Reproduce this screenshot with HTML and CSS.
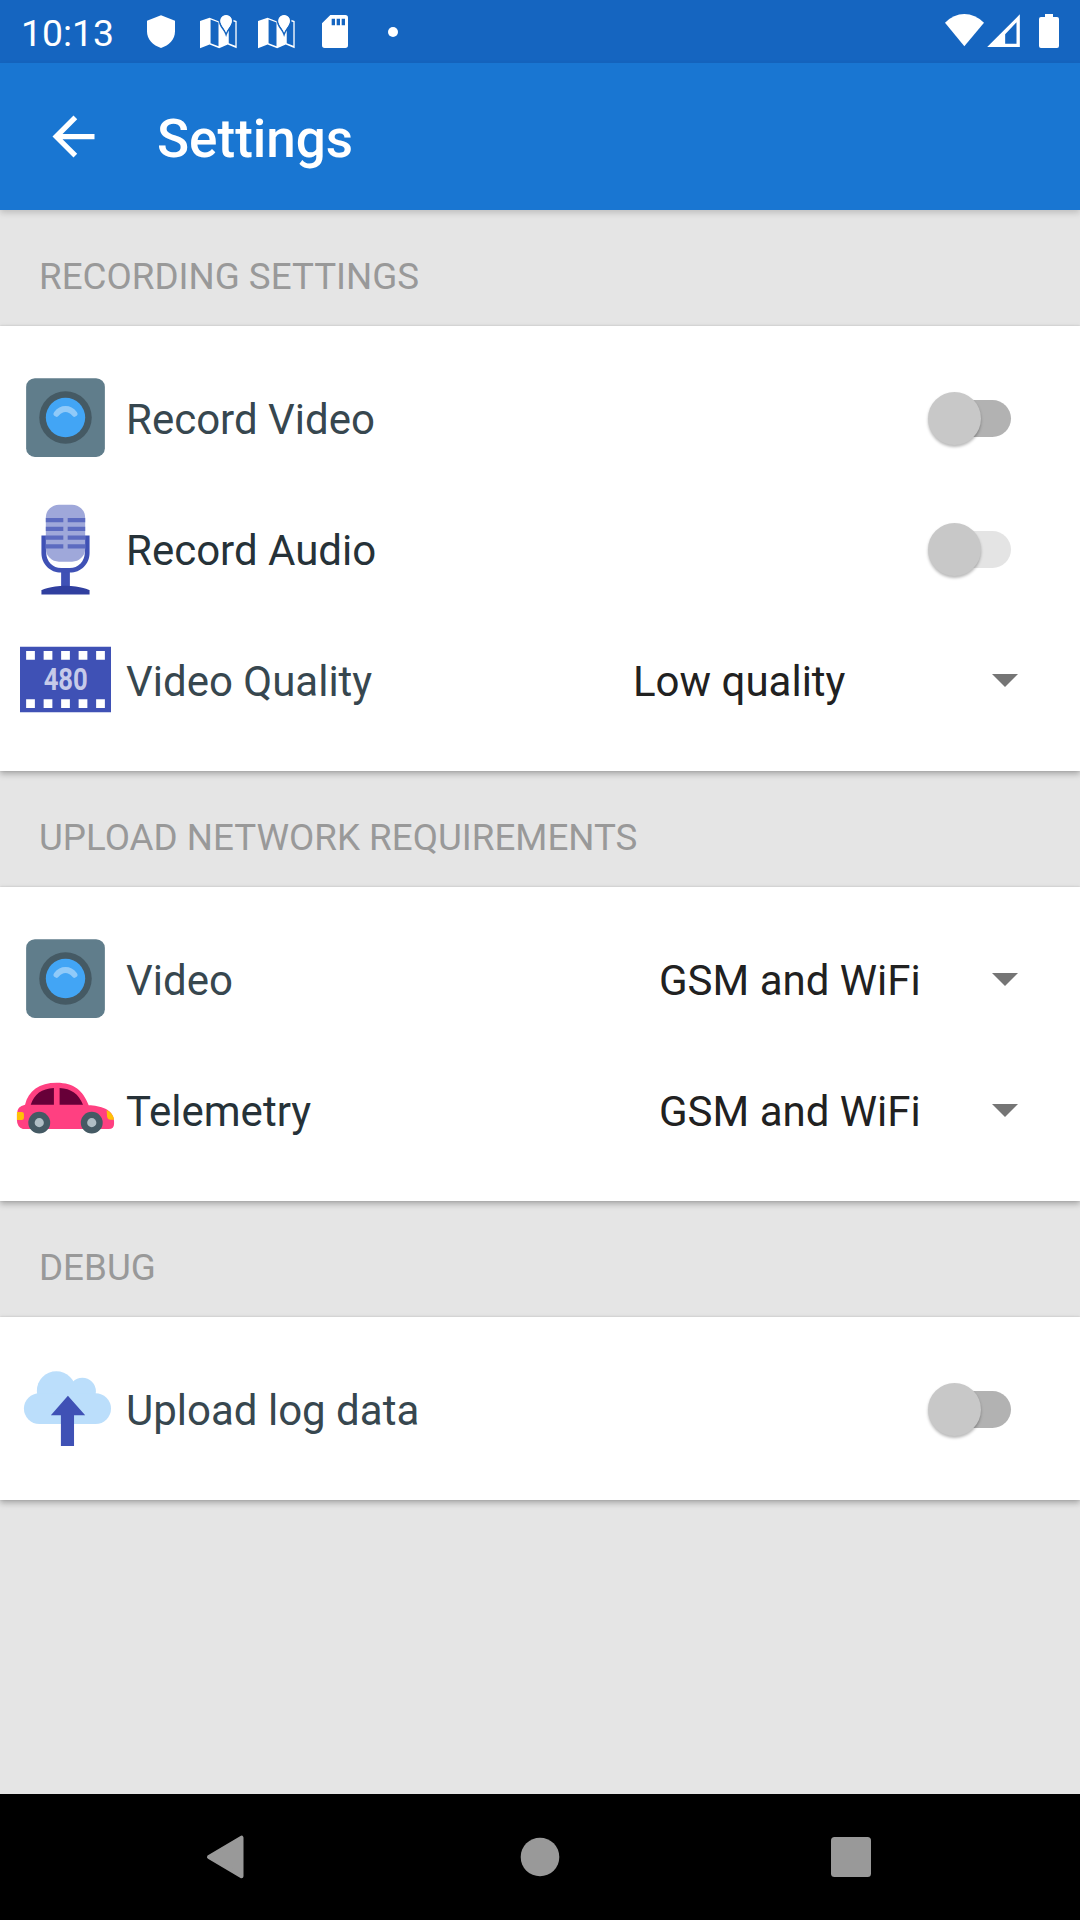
FILE: index.html
```html
<!DOCTYPE html>
<html lang="en">
<head>
<meta charset="utf-8">
<title>Settings</title>
<link rel="stylesheet" href="styles.css">
</head>
<body>
<svg class="defs" width="0" height="0">
  <symbol id="map" viewBox="600 0 112 189">
    <path fill="#fff" fill-rule="evenodd" d="M600 63l29-10 29 11 26-10 27 9v82l-27-11-26 11-29-11-29 11zM632 58v72l24 9V67zM687 84v46l20 8V66l-8-2z"/>
    <path fill="#fff" stroke="#1565c0" stroke-width="5" d="M679 103c-5-16-20-24-20-41a20 20 0 0 1 40 0c0 17-15 25-20 41z"/>
    <path fill="#fff" d="M679 98c-5-14-17-22-17-36a17 17 0 0 1 34 0c0 14-12 22-17 36z"/>
  </symbol>
  <symbol id="camera" viewBox="0 0 48 48">
    <rect x="6" y="6" width="36" height="36" rx="4" fill="#607d8b"/>
    <circle cx="24" cy="24" r="12" fill="#455a64"/>
    <circle cx="24" cy="24" r="9" fill="#42a5f5"/>
    <path d="M19.900 22.300c1.100-1.400 2.500-2.200 4.100-2.200s3 .8 4.100 2.200" fill="none" stroke="#90caf9" stroke-width="2.700" stroke-linecap="round"/>
  </symbol>
</svg>

<header class="status">
  <span class="clock">10:13</span>
  <svg class="shield" width="28" height="63" viewBox="441 0 84 189"><path fill="#fff" d="M483 46l42 16v32c0 24-18 43-42 50-24-7-42-26-42-50V62z"/></svg>
  <svg class="map" width="37" height="63"><use href="#map"/></svg>
  <svg class="map" width="37" height="63"><use href="#map"/></svg>
  <svg class="sd" width="26" height="63" viewBox="966 0 78 189"><path fill="#fff" fill-rule="evenodd" d="M991 45h45q8 0 8 8v83q0 8-8 8h-62q-8 0-8-8V70zM995 56v20h10V56zM1010 56v20h10V56zM1025 56v20h10V56z"/></svg>
  <i class="dot"></i>
  <svg class="wifi" width="39" height="63" viewBox="135 0 117 189"><path fill="#fff" d="M135 68q26-26 58-26t59 26l-59 71z"/></svg>
  <svg class="signal" width="33" height="63" viewBox="262 0 98 189"><path fill="#fff" fill-rule="evenodd" d="M360 43v98h-98zM350 67l-34 36v28h34z"/></svg>
  <svg class="battery" width="20" height="63" viewBox="417 0 60 189"><path fill="#fff" d="M435 42h24v9h12q6 0 6 6v81q0 6-6 6h-48q-6 0-6-6V57q0-6 6-6h12z"/></svg>
</header>

<div class="appbar">
  <svg width="63" height="63" viewBox="0 0 24 24"><path fill="#fff" d="M20 11H7.830l5.590-5.590L12 4l-8 8 8 8 1.410-1.410L7.830 13H20v-2z"/></svg>
  <h1>Settings</h1>
</div>

<main>
  <h2>RECORDING SETTINGS</h2>
  <section>
    <div class="row">
      <svg class="icon"><use href="#camera"/></svg>
      <span class="label soft">Record Video</span>
      <span class="switch"></span>
    </div>
    <div class="row">
      <svg class="icon" viewBox="0 0 48 48">
        <path fill="#3f51b5" d="M22 34h4v8h-4z"/>
        <path fill="#3f51b5" d="M13 18v8c0 5 4 9 9 9h4c5 0 9-4 9-9v-8h-2.200v8c0 3.800-3.100 6.900-6.800 6.900h-4c-3.700 0-6.800-3.100-6.800-6.900v-8z"/>
        <rect x="15" y="4" width="18" height="26" rx="6" fill="#9fa8da"/>
        <path fill="#5c6bc0" d="M15 10h8v2h-8zM25 10h8v2h-8zM15 14h8v2h-8zM25 14h8v2h-8zM15 18h8v2h-8zM25 18h8v2h-8zM15 22h8v2h-8zM25 22h8v2h-8z"/>
        <path fill="#303f9f" d="M13 45v-2s4-2 11-2 11 2 11 2v2z"/>
      </svg>
      <span class="label">Record Audio</span>
      <span class="switch disabled"></span>
    </div>
    <div class="row">
      <svg class="icon" viewBox="0 0 48 48">
        <path fill="#3f51b5" d="M3.200 9h41.600v30H3.200z"/>
        <path fill="#fff" d="M6 11h4v4H6zM14 11h4v4h-4zM22 11h4v4h-4zM30 11h4v4h-4zM38 11h4v4h-4zM6 33h4v4H6zM14 33h4v4h-4zM22 33h4v4h-4zM30 33h4v4h-4zM38 33h4v4h-4z"/>
        <text class="resolution" x="14" y="28.900" textLength="20.200" lengthAdjust="spacingAndGlyphs">480</text>
      </svg>
      <span class="label soft">Video Quality</span>
      <span class="value quality">Low quality</span>
      <i class="caret"></i>
    </div>
  </section>

  <h2>UPLOAD NETWORK REQUIREMENTS</h2>
  <section>
    <div class="row">
      <svg class="icon"><use href="#camera"/></svg>
      <span class="label soft">Video</span>
      <span class="value">GSM and WiFi</span>
      <i class="caret"></i>
    </div>
    <div class="row">
      <svg class="icon" viewBox="0 0 48 48">
        <path fill="#ff4081" d="M1.800 26q0-3.500 3.700-4.200C7 15.500 12 11.800 20 11.800S32 15.500 34.600 22c5 .2 11.600 1.600 11.600 7.500v1q0 2.400-2.400 2.400H4.500q-2.700-1-2.700-4z"/>
        <path fill="#670038" d="M8.100 21.800C9.800 17 13 14.500 18.700 14.200v7.600zM21.300 14.200c5.200.2 8.800 2.800 10.700 7.600H21.300z"/>
        <path fill="#ffc107" d="M1.800 25.100H4q1 0 1 1v1.700q0 1-1 1H1.800zM42.800 24.200q3 1.400 3.400 4.500h-1.700q-1.200 0-1.500-1.500z"/>
        <circle cx="12" cy="30" r="5" fill="#455a64"/><circle cx="36" cy="30" r="5" fill="#455a64"/>
        <circle cx="12" cy="30" r="2.100" fill="#b0bec5"/><circle cx="36" cy="30" r="2.100" fill="#b0bec5"/>
      </svg>
      <span class="label">Telemetry</span>
      <span class="value">GSM and WiFi</span>
      <i class="caret"></i>
    </div>
  </section>

  <h2>DEBUG</h2>
  <section>
    <div class="row">
      <svg class="icon" viewBox="0 0 48 48">
        <g fill="#bbdefb"><circle cx="19.800" cy="15.900" r="8.900"/><circle cx="31.700" cy="16.100" r="6.200"/><rect x="5" y="17" width="39.800" height="14.100" rx="7.050"/></g>
        <path fill="#3f51b5" d="M25.100 18.200l7.900 8.900h-5.100v14h-6v-14h-4.600z"/>
      </svg>
      <span class="label soft">Upload log data</span>
      <span class="switch"></span>
    </div>
  </section>
</main>

<nav>
  <svg width="40" height="46" viewBox="205 1834 40 46"><path fill="#999" stroke="#999" stroke-width="4" stroke-linejoin="round" d="M209 1857l32.500-19.300v38.600z"/></svg>
  <svg width="40" height="40" viewBox="0 0 40 40"><circle cx="20" cy="20" r="19.300" fill="#999"/></svg>
  <svg width="40" height="40" viewBox="0 0 40 40"><rect width="40" height="40" rx="3.500" fill="#999"/></svg>
</nav>
</body>
</html>
```
FILE: styles.css
```css
* { box-sizing: border-box; }

body {
  margin: 0;
  width: 1080px;
  height: 1920px;
  display: flex;
  flex-direction: column;
  overflow: hidden;
  background: #e5e5e5;
  font-family: Roboto, sans-serif;
  color: #212121;
}

svg { display: block; flex: none; }
.defs { display: none; }

.status {
  height: 63px;
  flex: none;
  display: flex;
  align-items: center;
  padding: 0 21px 0 21px;
  background: #1565c0;
  color: #fff;
}
.clock {
  width: 126px;
  padding-top: 3px;
  font-size: 37.3px;
  white-space: nowrap;
}
.map { margin-left: 25px; }
.map + .map { margin-left: 21px; }
.sd { margin-left: 27px; }
.dot {
  width: 10px;
  height: 10px;
  margin-left: 40px;
  border-radius: 50%;
  background: #fff;
}
.wifi { margin-left: auto; }
.signal { margin-left: 3px; }
.battery { margin-left: 19px; }

.appbar {
  height: 147px;
  flex: none;
  display: flex;
  align-items: center;
  padding-left: 42px;
  background: #1976d2;
  color: #fff;
  position: relative;
  box-shadow: 0 3px 6px rgba(0, 0, 0, .16);
}
.appbar h1 {
  margin: 0 0 0 52px;
  padding-top: 5px;
  font-size: 53px;
  font-weight: 500;
}

main { flex: 1; }

h2 {
  height: 116px;
  margin: 0;
  padding: 17px 0 0 39px;
  display: flex;
  align-items: center;
  font-size: 36.75px;
  font-weight: 400;
  color: #999;
}

section {
  padding: 26px 0;
  background: #fff;
  box-shadow: 0 3px 6px rgba(0, 0, 0, .27), 0 0 2px rgba(0, 0, 0, .12);
}

.row {
  height: 131px;
  display: flex;
  align-items: center;
  padding-left: 13px;
  font-size: 42px;
  white-space: nowrap;
}
.icon { width: 105px; height: 105px; }
.resolution {
  font-family: Roboto, sans-serif;
  font-size: 14px;
  font-weight: 700;
  fill: #c5cae9;
}
.label {
  flex: 1;
  padding: 4px 0 0 8px;
  color: #263238;
}
.soft { color: #37474f; }

.value {
  width: 333px;
  padding-top: 4px;
}
.quality { width: 359px; }
.caret {
  width: 26px;
  height: 13px;
  margin: 2px 62px 0 0;
  background: #757575;
  clip-path: polygon(0 0, 100% 0, 50% 100%);
}

.switch {
  width: 83px;
  height: 37px;
  margin: 1px 69px 0 0;
  display: flex;
  align-items: center;
  border-radius: 19px;
  background: linear-gradient(90deg, transparent 20px, #b2b2b2 20px);
}
.switch.disabled { background: linear-gradient(90deg, transparent 20px, #e4e4e4 20px); }
.switch::before {
  content: "";
  width: 53px;
  height: 53px;
  border-radius: 50%;
  background: #c8c8c8;
  box-shadow: 0 2px 3px rgba(0, 0, 0, .28);
}

nav {
  height: 126px;
  flex: none;
  display: grid;
  grid-template-columns: 315px 311px 40px;
  align-items: center;
  padding-left: 205px;
  background: #000;
}
```
